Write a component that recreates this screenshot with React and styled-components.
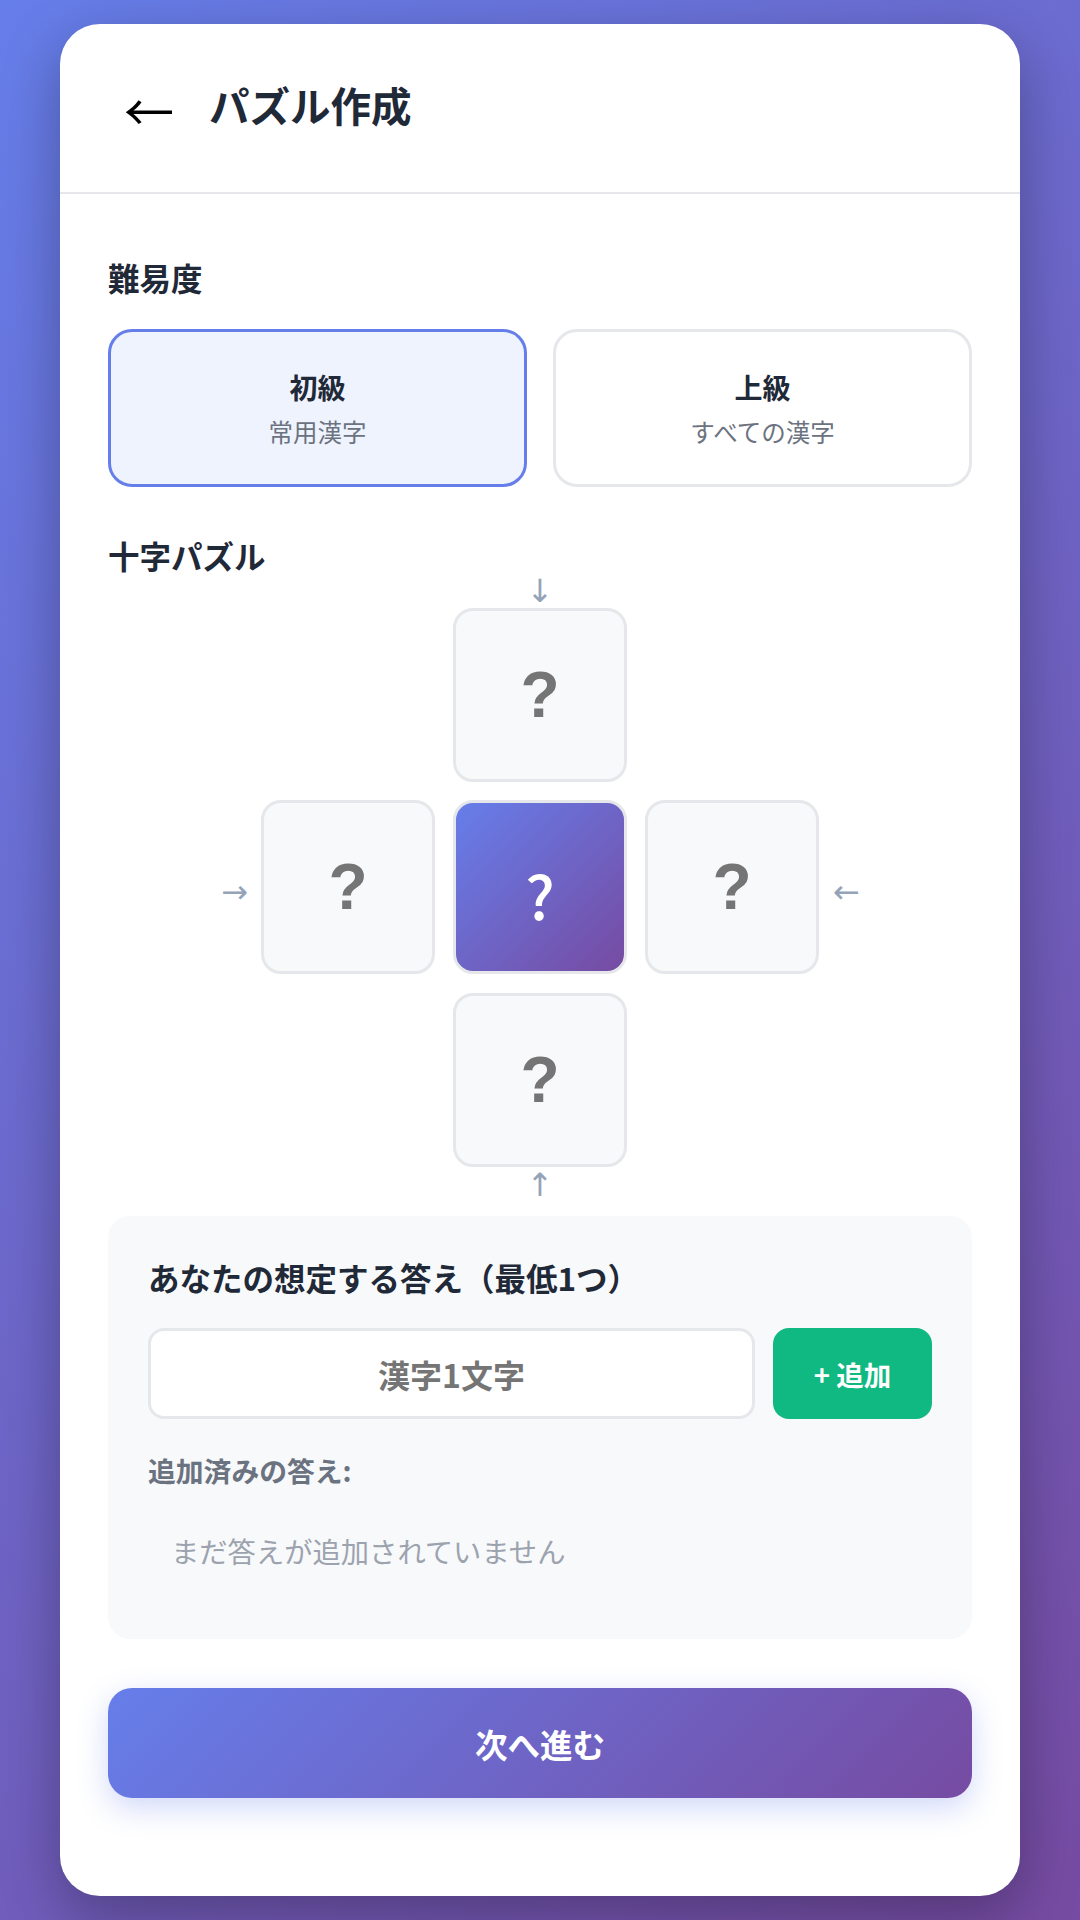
import React, { useState } from "react";
import styled, { createGlobalStyle, css } from "styled-components";

const GlobalStyle = createGlobalStyle`
  * { box-sizing: border-box; }
  html, body {
    margin: 0;
    padding: 0;
  }
  body {
    min-height: 100vh;
    background: linear-gradient(135deg, #667eea 0%, #764ba2 100%);
    font-family: "Noto Sans CJK JP", "Noto Sans", sans-serif;
    color: #1f2937;
  }
`;

const Page = styled.div`
  padding: 24px 60px;
`;

const Card = styled.div`
  background: #fff;
  border-radius: 40px;
  min-height: calc(100vh - 48px);
  box-shadow: 0 20px 60px rgba(0, 0, 0, 0.3);
  overflow: hidden;
`;

const Header = styled.header`
  height: 170px;
  display: flex;
  align-items: center;
  gap: 35px;
  padding: 0 64px 8px;
  border-bottom: 2px solid #e5e7eb;
`;

const BackButton = styled.button`
  border: none;
  background: none;
  padding: 0;
  font-family: "Noto Sans CJK JP", sans-serif;
  font-weight: 400;
  font-size: 50px;
  line-height: 1;
  color: #000;
  cursor: pointer;
  margin-top: 10px;
`;

const Title = styled.h1`
  margin: 0;
  font-size: 40.5px;
  font-weight: 700;
  color: #1f2937;
`;

const Content = styled.main`
  padding: 61px 48px 96px;
`;

const SectionLabel = styled.h2`
  margin: 0 0 ${(p) => p.$mb ?? 30}px;
  font-size: 31.5px;
  line-height: 44px;
  font-weight: 700;
  color: #1f2937;
`;

const LevelRow = styled.div`
  display: grid;
  grid-template-columns: 1fr 1fr;
  gap: 26px;
  margin-bottom: 46px;
`;

const LevelCard = styled.button`
  display: flex;
  flex-direction: column;
  align-items: center;
  gap: 8px;
  padding: 35px 16px;
  border-radius: 24px;
  border: 3px solid #e5e7eb;
  background: #fff;
  font-family: inherit;
  cursor: pointer;
  ${(p) =>
    p.$active &&
    css`
      border-color: #667eea;
      background: #eff3fe;
    `}
`;

const LevelName = styled.span`
  font-size: 28px;
  line-height: 40px;
  font-weight: 700;
  color: #1f2937;
`;

const LevelDesc = styled.span`
  font-size: 24.5px;
  line-height: 34px;
  color: #6b7280;
`;

const Cross = styled.div`
  display: grid;
  justify-content: center;
  grid-template-columns: 40px 174px 174px 174px 40px;
  grid-template-rows: 12px 174px 174px 174px 20px;
  column-gap: 18px;
  row-gap: 18.5px;
  grid-template-areas:
    ". . top-a . ."
    ". . top . ."
    "left-a left center right right-a"
    ". . bottom . ."
    ". . bottom-a . .";
  margin-bottom: 11px;
`;

const Arrow = styled.span`
  grid-area: ${(p) => p.$area};
  font-family: "DejaVu Sans", sans-serif;
  font-size: 32px;
  line-height: 28px;
  color: #94a3b8;
  display: flex;
  align-items: center;
  justify-content: center;
  ${(p) => p.$area === "top-a" && css`margin-bottom: -16px; align-items: flex-end;`}
  ${(p) => p.$area === "bottom-a" && css`margin-top: -14px; align-items: flex-start;`}
  ${(p) => p.$area === "left-a" && css`justify-content: flex-end; margin: 10px -5px 0 0;`}
  ${(p) => p.$area === "right-a" && css`justify-content: flex-start; margin: 10px 0 0 -4px;`}
`;

const Cell = styled.input`
  grid-area: ${(p) => p.$area};
  width: 174px;
  height: 174px;
  border: 3px solid #e5e7eb;
  border-radius: 20px;
  background: #f8f9fa;
  text-align: center;
  font-family: "Liberation Sans", Arial, sans-serif;
  font-size: 64px;
  font-weight: 700;
  color: #1f2937;
  outline: none;
  &::placeholder {
    color: #757575;
  }
  ${(p) =>
    p.$center &&
    css`
      background: linear-gradient(135deg, #667eea 0%, #764ba2 100%);
      font-family: "Noto Sans CJK JP", sans-serif;
      font-size: 60px;
      font-weight: 500;
      padding-top: 14px;
      color: #fff;
      &::placeholder {
        color: #fff;
      }
    `}
`;

const AnswerPanel = styled.section`
  background: #f8f9fa;
  border-radius: 22px;
  padding: 40px 40px 50px;
`;

const PanelTitle = styled.h3`
  margin: 0 0 30px;
  font-size: 31.5px;
  line-height: 42px;
  font-weight: 700;
  color: #1f2937;
`;

const InputRow = styled.div`
  display: flex;
  gap: 18px;
`;

const KanjiInput = styled.input`
  flex: 1;
  min-width: 0;
  height: 91px;
  border: 3px solid #e5e7eb;
  border-radius: 16px;
  background: #fff;
  text-align: center;
  font-family: "Noto Sans CJK JP", sans-serif;
  font-size: 32px;
  font-weight: 700;
  outline: none;
  &::placeholder {
    color: #757575;
  }
`;

const AddButton = styled.button`
  width: 159px;
  height: 91px;
  border: none;
  border-radius: 16px;
  background: #10b981;
  color: #fff;
  font-family: "Noto Sans CJK JP", sans-serif;
  font-size: 27.5px;
  font-weight: 700;
  cursor: pointer;
`;

const AddedLabel = styled.div`
  margin-top: 32px;
  font-size: 27.8px;
  line-height: 38px;
  font-weight: 700;
  color: #6b7280;
`;

const AnswerList = styled.div`
  margin-top: 24px;
  padding: 18px 23px;
`;

const EmptyText = styled.p`
  margin: 0;
  font-size: 28.3px;
  line-height: 40px;
  color: #9ca3af;
`;

const NextButton = styled.button`
  display: block;
  width: 100%;
  height: 110px;
  margin-top: 49px;
  border: none;
  border-radius: 24px;
  background: linear-gradient(135deg, #667eea 0%, #764ba2 100%);
  box-shadow: 0 10px 30px rgba(102, 126, 234, 0.3);
  color: #fff;
  font-family: "Noto Sans CJK JP", sans-serif;
  font-size: 32.5px;
  font-weight: 700;
  cursor: pointer;
`;

export default function App() {
  const [level, setLevel] = useState("easy");
  const [answers, setAnswers] = useState([]);
  const [draft, setDraft] = useState("");

  const addAnswer = () => {
    if (!draft) return;
    setAnswers([...answers, draft]);
    setDraft("");
  };

  return (
    <>
      <GlobalStyle />
      <Page>
        <Card>
          <Header>
            <BackButton>←</BackButton>
            <Title>パズル作成</Title>
          </Header>
          <Content>
            <SectionLabel>難易度</SectionLabel>
            <LevelRow>
              <LevelCard $active={level === "easy"} onClick={() => setLevel("easy")}>
                <LevelName>初級</LevelName>
                <LevelDesc>常用漢字</LevelDesc>
              </LevelCard>
              <LevelCard $active={level === "hard"} onClick={() => setLevel("hard")}>
                <LevelName>上級</LevelName>
                <LevelDesc>すべての漢字</LevelDesc>
              </LevelCard>
            </LevelRow>

            <SectionLabel $mb={0}>十字パズル</SectionLabel>
            <Cross>
              <Arrow $area="top-a">↓</Arrow>
              <Cell $area="top" placeholder="?" maxLength={1} />
              <Arrow $area="left-a">→</Arrow>
              <Cell $area="left" placeholder="?" maxLength={1} />
              <Cell $area="center" $center placeholder="?" maxLength={1} />
              <Cell $area="right" placeholder="?" maxLength={1} />
              <Arrow $area="right-a">←</Arrow>
              <Cell $area="bottom" placeholder="?" maxLength={1} />
              <Arrow $area="bottom-a">↑</Arrow>
            </Cross>

            <AnswerPanel>
              <PanelTitle>あなたの想定する答え（最低1つ）</PanelTitle>
              <InputRow>
                <KanjiInput
                  placeholder="漢字1文字"
                  maxLength={1}
                  value={draft}
                  onChange={(e) => setDraft(e.target.value)}
                />
                <AddButton onClick={addAnswer}>+ 追加</AddButton>
              </InputRow>
              <AddedLabel>追加済みの答え:</AddedLabel>
              <AnswerList>
                {answers.length === 0 ? (
                  <EmptyText>まだ答えが追加されていません</EmptyText>
                ) : (
                  answers.map((a, i) => <EmptyText key={i}>{a}</EmptyText>)
                )}
              </AnswerList>
            </AnswerPanel>

            <NextButton>次へ進む</NextButton>
          </Content>
        </Card>
      </Page>
    </>
  );
}
